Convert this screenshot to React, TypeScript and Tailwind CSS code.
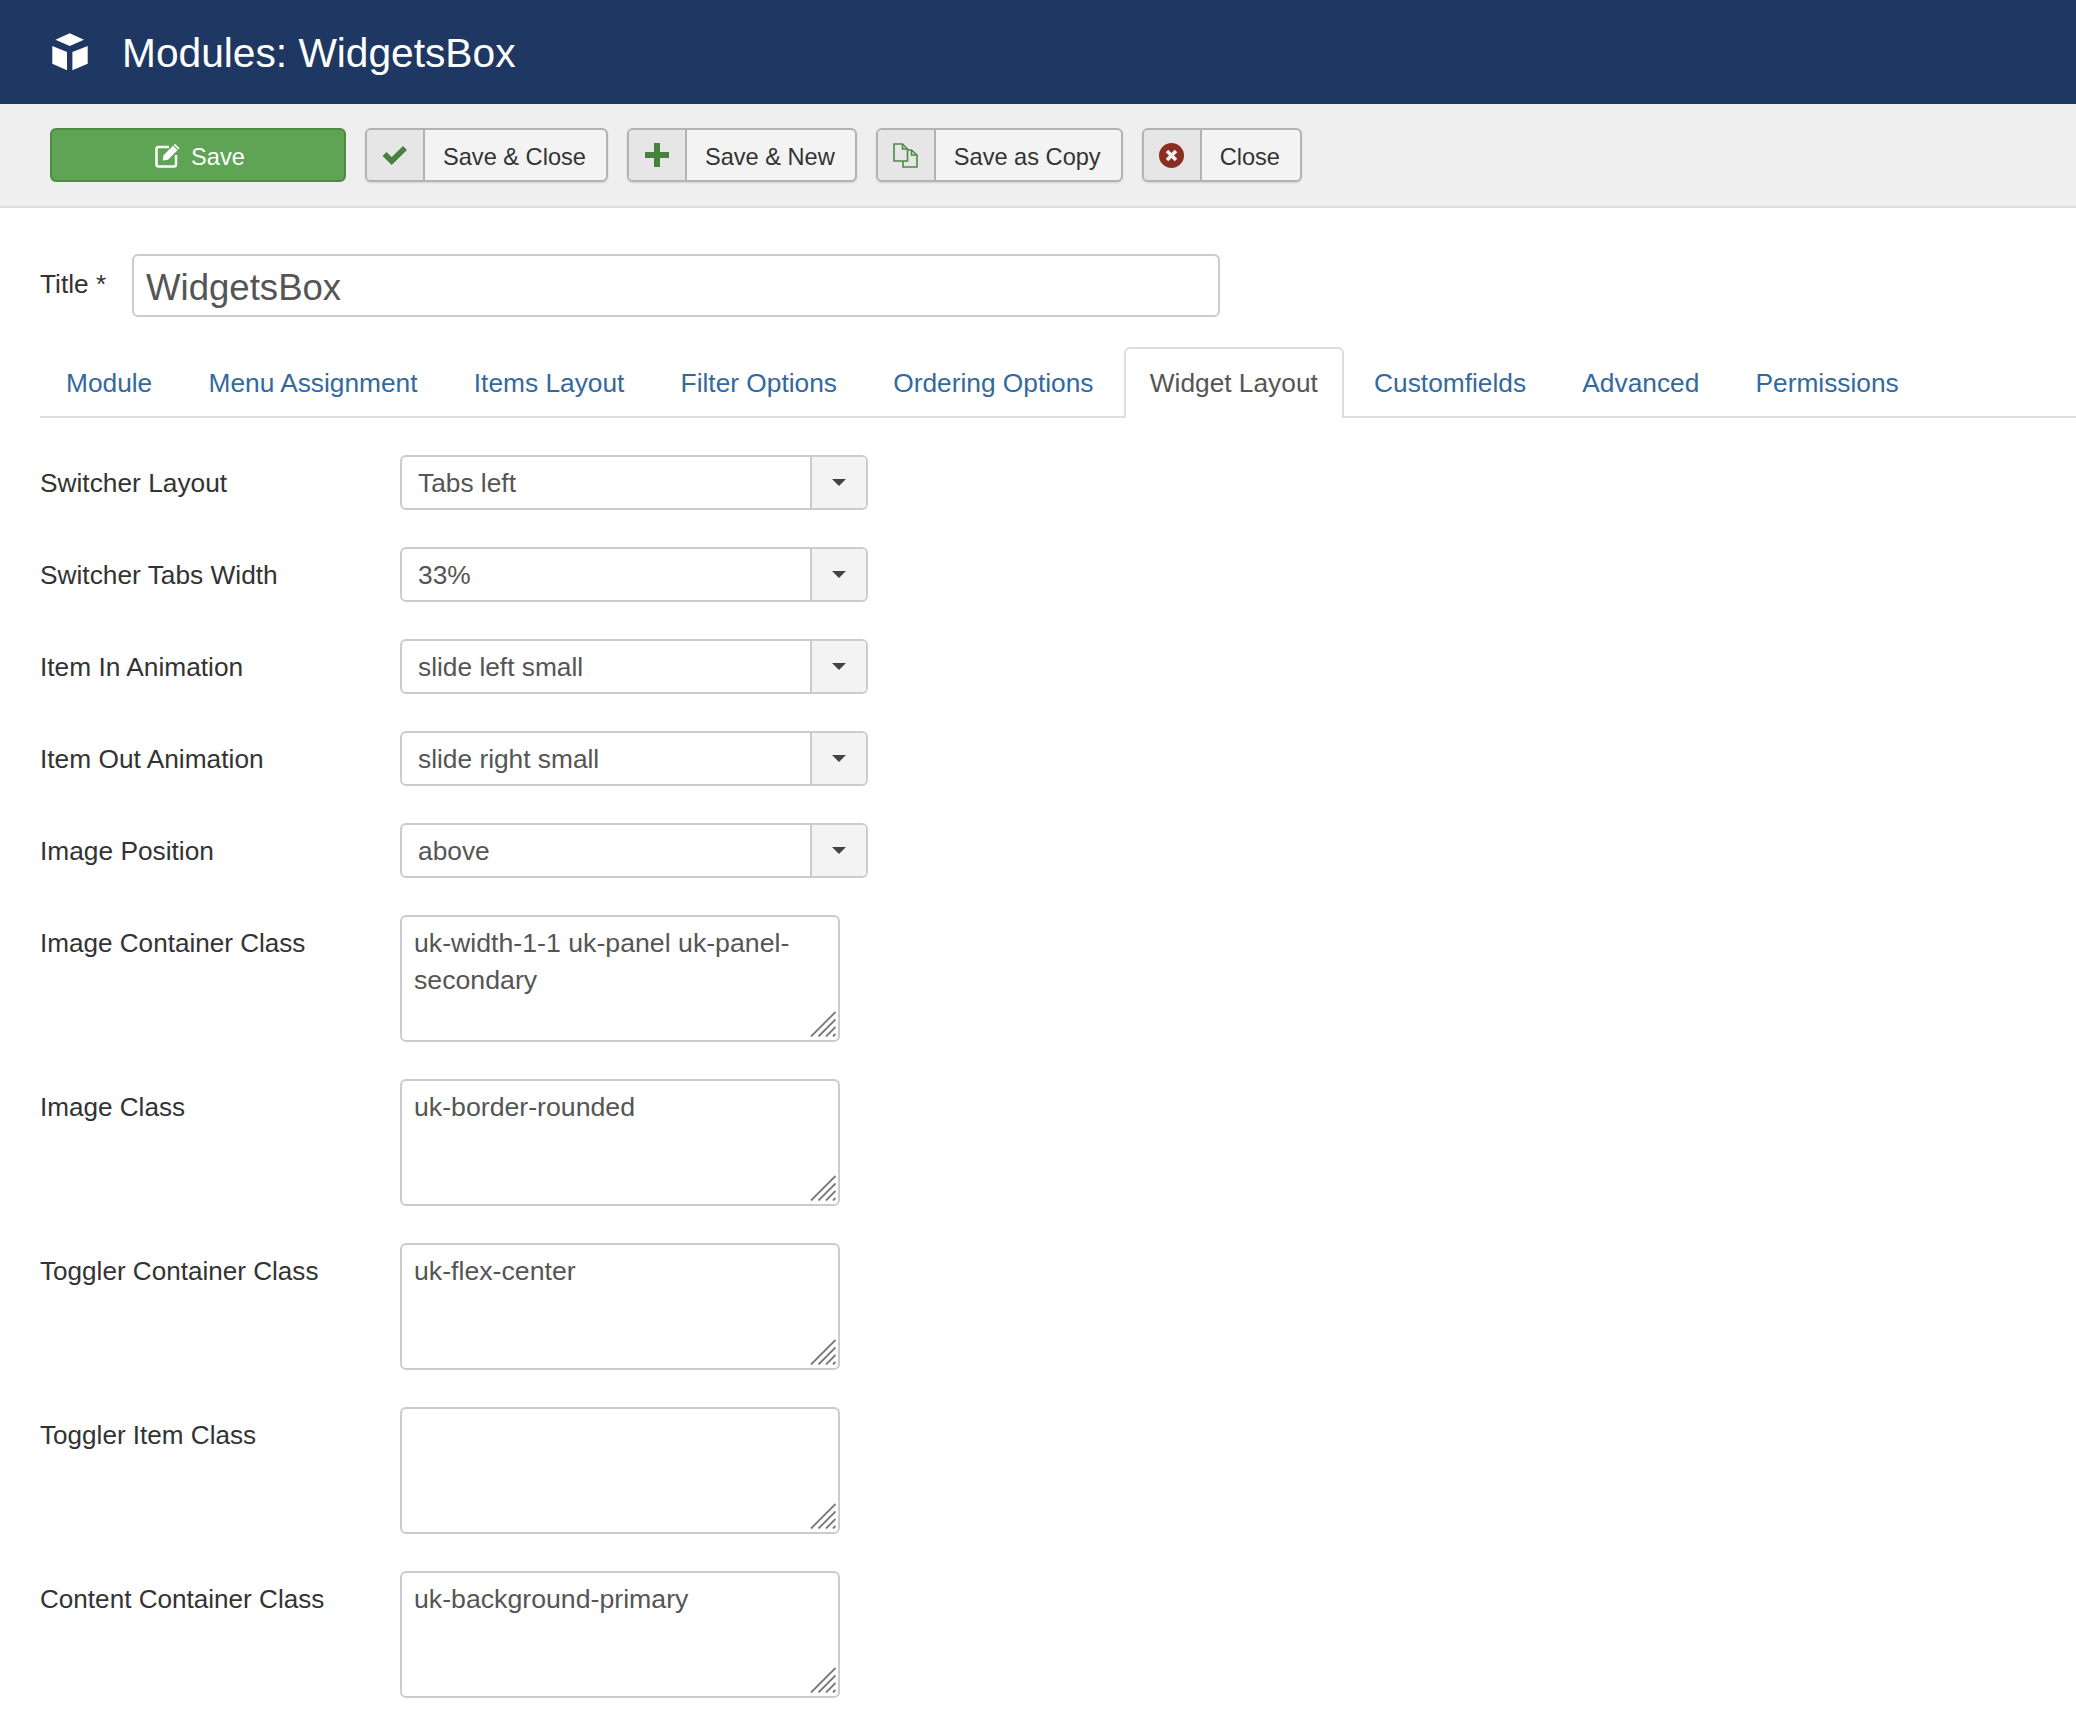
import React from 'react'

const tabs = ['Module', 'Menu Assignment', 'Items Layout', 'Filter Options', 'Ordering Options', 'Widget Layout', 'Customfields', 'Advanced', 'Permissions']

const selects = [
  { label: 'Switcher Layout', value: 'Tabs left' },
  { label: 'Switcher Tabs Width', value: '33%' },
  { label: 'Item In Animation', value: 'slide left small' },
  { label: 'Item Out Animation', value: 'slide right small' },
  { label: 'Image Position', value: 'above' },
]

const textareas = [
  { label: 'Image Container Class', value: 'uk-width-1-1 uk-panel uk-panel-secondary' },
  { label: 'Image Class', value: 'uk-border-rounded' },
  { label: 'Toggler Container Class', value: 'uk-flex-center' },
  { label: 'Toggler Item Class', value: '' },
  { label: 'Content Container Class', value: 'uk-background-primary' },
]

function CubeIcon() {
  return (
    <svg width="36" height="38" viewBox="0 0 36 38" fill="#fff">
      <path d="M17.7 0.3 32 6.7 17.7 13 3.4 6.7Z" />
      <path d="M0.3 13 15 19V37.3L0.3 30.7Z" />
      <path d="M35.7 13 20.4 19V37.3L35.7 30.7Z" />
    </svg>
  )
}

function EditIcon() {
  return (
    <svg width="26" height="26" viewBox="0 0 26 26" fill="none">
      <path d="M14 5H3.5C2.4 5 1.5 5.9 1.5 7V22.5C1.5 23.6 2.4 24.5 3.5 24.5H19C20.1 24.5 21 23.6 21 22.5V13" stroke="#fff" strokeWidth="2.5" />
      <path d="M8.5 13.2 20 1.7 24.5 6.2 13 17.7 7.7 18.5Z" fill="#fff" />
      <path d="M18.4 3.4 22.9 7.9" stroke="#5fa355" strokeWidth="1.2" />
    </svg>
  )
}

function CheckIcon() {
  return (
    <svg width="26" height="20" viewBox="0 0 26 20" fill="none">
      <path d="M2.5 9 9.7 16 23 3" stroke="#47803f" strokeWidth="5.6" />
    </svg>
  )
}

function PlusIcon() {
  return (
    <svg width="24" height="24" viewBox="0 0 24 24" fill="#47803f">
      <path d="M9 0H15V9H24V15H15V24H9V15H0V9H9Z" />
    </svg>
  )
}

function CopyIcon() {
  return (
    <svg width="25" height="25" viewBox="0 0 25 25" fill="none" stroke="#4d8a45" strokeWidth="1.6">
      <path d="M1 1H9.5L14.5 6V18H1Z" />
      <path d="M9.5 1V6H14.5" />
      <path d="M14.5 7H18.5L24 12V24H10V18" />
      <path d="M18.5 7V12H24" />
    </svg>
  )
}

function CloseIcon() {
  return (
    <svg width="25" height="25" viewBox="0 0 25 25">
      <circle cx="12.5" cy="12.5" r="12.5" fill="#8c2d24" />
      <path d="M8 8 17 17M17 8 8 17" stroke="#f3f3f3" strokeWidth="3.6" />
    </svg>
  )
}

function Grip() {
  return (
    <svg className="absolute right-[2px] bottom-[3px]" width="26" height="26" viewBox="0 0 26 26" stroke="#777" strokeWidth="1.8">
      <path d="M1 25.5 25.5 1M8.5 25.5 25.5 8.5M16 25.5 25.5 16M23 25.5 25.5 23" />
    </svg>
  )
}

function ToolbarButton({ icon, label }: { icon: React.ReactNode; label: string }) {
  return (
    <button type="button" className="flex h-[54px] items-stretch rounded-[6px] border-2 border-[#b3b3b3] bg-[#f3f3f3] text-[23.6px] text-[#333] shadow-[0_1px_2px_rgba(0,0,0,0.12)]">
      <span className="flex w-[58px] items-center justify-center rounded-l-[4px] border-r-2 border-[#b3b3b3] bg-[#e6e6e6]">{icon}</span>
      <span className="flex items-center pt-[4px] pr-[20px] pl-[18px]">{label}</span>
    </button>
  )
}

export default function App() {
  return (
    <div className="min-h-[1734px] bg-white font-['Liberation_Sans',Arial,sans-serif] text-[26.3px] leading-[37px] text-[#333]">
      <header className="flex h-[104px] items-center bg-[#1f3863] pl-[52px] text-white">
        <CubeIcon />
        <h1 className="ml-[34px] pt-[2px] text-[40.7px] leading-none">Modules: WidgetsBox</h1>
      </header>

      <div className="flex h-[104px] items-start gap-[19px] border-b-2 border-[#dcdcdc] bg-[#efefef] pt-[24px] pl-[50px]">
        <button type="button" className="flex h-[54px] w-[296px] items-center justify-center gap-[10px] rounded-[6px] border-2 border-[#4f8a45] bg-[#5fa355] pl-[4px] text-[23.6px] text-white">
          <EditIcon />
          <span className="pt-[4px]">Save</span>
        </button>
        <ToolbarButton icon={<CheckIcon />} label="Save & Close" />
        <ToolbarButton icon={<PlusIcon />} label="Save & New" />
        <ToolbarButton icon={<CopyIcon />} label="Save as Copy" />
        <ToolbarButton icon={<CloseIcon />} label="Close" />
      </div>

      <main className="pt-[46px] pb-[37px] pl-[40px]">
        <div className="flex items-start">
          <label className="w-[92px] pt-[12px]">Title *</label>
          <div className="flex h-[63px] w-[1088px] items-center rounded-[6px] border-2 border-[#ccc] pt-[3px] pl-[12px] text-[36.6px] text-[#555]">WidgetsBox</div>
        </div>

        <nav className="mt-[30px] flex h-[71px] items-stretch gap-[4.25px] border-b-2 border-[#ddd]">
          {tabs.map(tab =>
            tab === 'Widget Layout' ? (
              <span key={tab} className="-mb-[2px] flex items-center rounded-t-[6px] border-2 border-b-0 border-[#ddd] bg-white px-[24px] text-[#555]">{tab}</span>
            ) : (
              <a key={tab} className="flex items-center px-[26px] pt-[4px] text-[#33699e]">{tab}</a>
            )
          )}
        </nav>

        <div className="mt-[37px] flex flex-col gap-[37px]">
          {selects.map(row => (
            <div key={row.label} className="flex items-start">
              <label className="w-[360px] pt-[10px]">{row.label}</label>
              <div className="flex h-[55px] w-[468px] items-stretch rounded-[6px] border-2 border-[#ccc] text-[#555]">
                <span className="flex flex-1 items-center pt-[2px] pl-[16px]">{row.value}</span>
                <span className="flex w-[56px] items-center justify-center rounded-r-[4px] border-l-2 border-[#ccc] bg-[#f3f3f3]">
                  <span className="h-0 w-0 border-x-[7px] border-t-[7px] border-x-transparent border-t-[#444]" />
                </span>
              </div>
            </div>
          ))}

          {textareas.map(row => (
            <div key={row.label} className="flex items-start">
              <label className="w-[360px] pt-[10px] text-[26.1px]">{row.label}</label>
              <div className="relative h-[127px] w-[440px] rounded-[6px] border-2 border-[#ccc] px-[12px] pt-[8px] text-[26.7px] text-[#555]">
                {row.value}
                <Grip />
              </div>
            </div>
          ))}
        </div>
      </main>
    </div>
  )
}
